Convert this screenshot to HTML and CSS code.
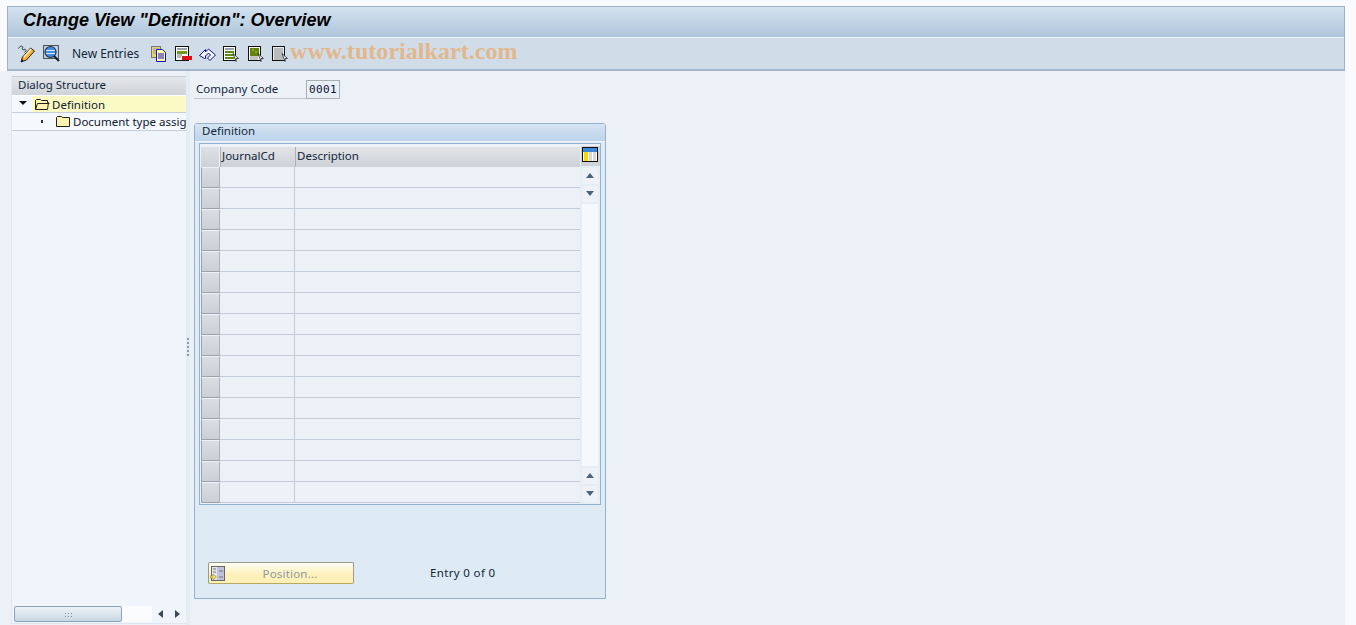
FILE: index.html
```html
<!DOCTYPE html>
<html>
<head>
  <title>Change View "Definition": Overview</title>
  <link rel="stylesheet" href="styles.css">
</head>
<body>
  <div class="window-head">
    <div class="title-bar">Change View "Definition": Overview</div>
    <div class="toolbar">
      <svg class="tool tool-edit" viewBox="0 0 18 18">
        <path d="M0.500 3.500c1-2 3-3 4-2s-1 2 0 3 2-1 3 0 0 2-1 3" fill="none" stroke="#333" stroke-width="1"/>
        <path d="M3 17l1.500-5 8-9 4 3-8 9z" fill="#f7b52e" stroke="#222" stroke-width="1"/>
        <path d="M6 12l7-8" stroke="#fff2c0" stroke-width="1.500"/>
        <path d="M3 17l0.800-3 2 1.500z" fill="#222"/>
      </svg>
      <svg class="tool tool-view" viewBox="0 0 17 17">
        <rect x="0.500" y="0.500" width="15" height="13" fill="#c3ced8" stroke="#4a5560"/>
        <circle cx="7.500" cy="7" r="5.500" fill="#3f8be6" stroke="#2a3340" stroke-width="1.200"/>
        <path d="M3 5.500h9M3 8.500h9" stroke="#d6e8fb"/>
        <path d="M11 11l5 5" stroke="#1c2228" stroke-width="2.200"/>
      </svg>
      <span class="tool-text">New Entries</span>
      <svg class="tool tool-copy" viewBox="0 0 16 16">
        <rect x="0.500" y="0.500" width="9" height="11" fill="#e2d27e" stroke="#777"/>
        <path d="M2 3h6M2 5h3M2 7h3" stroke="#999"/>
        <path d="M5.500 3.500h6l3 3v9h-9z" fill="#fff7a0" stroke="#1212cc"/>
        <path d="M7 8h6M7 10h6M7 12h6" stroke="#1212cc"/>
      </svg>
      <svg class="tool tool-delete" viewBox="0 0 17 16">
        <rect x="0.500" y="0.500" width="13" height="14" fill="#fff" stroke="#111"/>
        <path d="M2 2h10v2H2z" fill="#9aa4a8"/>
        <path d="M2 5h10v3H2z" fill="#6f9a1c"/>
        <path d="M2 9h5M2 11h4" stroke="#777"/>
        <rect x="7" y="10" width="10" height="4" fill="#e0101a"/>
      </svg>
      <svg class="tool tool-undo" viewBox="0 0 18 16">
        <path d="M0.500 9.500l6-6v2.500l3-3 7 6-5.500 5.500-2.500-2.500 3-3-2-2-3 3v2.500h-1z" fill="#f4f7fb" stroke="#10108c" stroke-width="1"/>
      </svg>
      <svg class="tool tool-page" viewBox="0 0 16 16">
        <rect x="0.500" y="0.500" width="12" height="14" fill="#fff" stroke="#111"/>
        <path d="M2 2h9v2H2z" fill="#9aa4a8"/>
        <path d="M2 5h9v2H2zM2 8h9v2H2zM2 11h9v2H2z" fill="#5f8a14"/>
        <path d="M10 7.500l5.500 5h-2.500l0 3z" fill="#fff" stroke="#222" stroke-width="0.800"/>
      </svg>
      <svg class="tool tool-page2" viewBox="0 0 16 16">
        <rect x="0.500" y="0.500" width="12" height="14" fill="#fff" stroke="#111"/>
        <path d="M2 2h9v8H2z" fill="#64800f"/>
        <path d="M4 3h2v2H4zM7 5h2v2H7z" fill="#8fae2e"/>
        <path d="M2 11h8M2 13h8" stroke="#888"/>
        <path d="M10 7.500l5.500 5h-2.500l0 3z" fill="#fff" stroke="#222" stroke-width="0.800"/>
      </svg>
      <svg class="tool tool-page3" viewBox="0 0 16 16">
        <rect x="0.500" y="0.500" width="12" height="14" fill="#ececec" stroke="#111"/>
        <path d="M2 3h9M2 5h9M2 7h9M2 9h9M2 11h9M2 13h9" stroke="#8a8a8a"/>
        <path d="M10 7.500l5.500 5h-2.500l0 3z" fill="#fff" stroke="#222" stroke-width="0.800"/>
      </svg>
    </div>
    <div class="watermark">www.tutorialkart.com</div>
  </div>

  <div class="workspace">
    <div class="tree-panel">
      <div class="tree-head">Dialog Structure</div>
      <div class="tree-row tree-row-active">
        <span class="tree-arrow"></span>
        <div class="tree-selected">
          <svg class="folder" viewBox="0 0 16 13">
            <path d="M1.500 11.500v-9l1-1h4l1 1h6v2h1l-1 7z" fill="#fdf3b0" stroke="#222"/>
            <path d="M1.500 11.500l2-6h12" fill="none" stroke="#222"/>
          </svg>
          <span>Definition</span>
        </div>
      </div>
      <div class="tree-row tree-row-child">
        <span class="tree-dot"></span>
        <svg class="folder" viewBox="0 0 16 13">
          <path d="M1.500 11.500v-9l1-1h4l1 1h7v9z" fill="#fdf3b0" stroke="#222"/>
        </svg>
        <span class="tree-label">Document type assig</span>
      </div>
      <div class="tree-fill"></div>
      <div class="tree-scroll">
        <div class="tree-thumb"><span class="grip-h"></span></div>
        <div class="tree-track"></div>
        <div class="tree-btn"><span class="arrow-left"></span></div>
        <div class="tree-btn"><span class="arrow-right"></span></div>
      </div>
    </div>

    <div class="sash"><span class="sash-grip"></span></div>

    <div class="main">
      <div class="field-row">
        <label class="field-label">Company Code</label>
        <div class="field-input">0001</div>
      </div>

      <div class="group">
        <div class="group-head">Definition</div>
        <div class="group-body">
          <div class="table-box">
            <div class="table-cols">
              <div class="table-head">
                <div class="head-sel"></div>
                <div class="head-cell head-journal">JournalCd</div>
                <div class="head-cell head-desc">Description</div>
              </div>
              <div class="row"><div class="row-sel"></div><div class="cell cell-journal"></div><div class="cell cell-desc"></div></div>
              <div class="row"><div class="row-sel"></div><div class="cell cell-journal"></div><div class="cell cell-desc"></div></div>
              <div class="row"><div class="row-sel"></div><div class="cell cell-journal"></div><div class="cell cell-desc"></div></div>
              <div class="row"><div class="row-sel"></div><div class="cell cell-journal"></div><div class="cell cell-desc"></div></div>
              <div class="row"><div class="row-sel"></div><div class="cell cell-journal"></div><div class="cell cell-desc"></div></div>
              <div class="row"><div class="row-sel"></div><div class="cell cell-journal"></div><div class="cell cell-desc"></div></div>
              <div class="row"><div class="row-sel"></div><div class="cell cell-journal"></div><div class="cell cell-desc"></div></div>
              <div class="row"><div class="row-sel"></div><div class="cell cell-journal"></div><div class="cell cell-desc"></div></div>
              <div class="row"><div class="row-sel"></div><div class="cell cell-journal"></div><div class="cell cell-desc"></div></div>
              <div class="row"><div class="row-sel"></div><div class="cell cell-journal"></div><div class="cell cell-desc"></div></div>
              <div class="row"><div class="row-sel"></div><div class="cell cell-journal"></div><div class="cell cell-desc"></div></div>
              <div class="row"><div class="row-sel"></div><div class="cell cell-journal"></div><div class="cell cell-desc"></div></div>
              <div class="row"><div class="row-sel"></div><div class="cell cell-journal"></div><div class="cell cell-desc"></div></div>
              <div class="row"><div class="row-sel"></div><div class="cell cell-journal"></div><div class="cell cell-desc"></div></div>
              <div class="row"><div class="row-sel"></div><div class="cell cell-journal"></div><div class="cell cell-desc"></div></div>
              <div class="row"><div class="row-sel"></div><div class="cell cell-journal"></div><div class="cell cell-desc"></div></div>
            </div>
            <div class="table-side">
              <div class="config-btn">
                <svg class="config-icon" viewBox="0 0 16 15">
                  <rect x="0.500" y="0.500" width="15" height="14" fill="#fff" stroke="#111"/>
                  <rect x="1" y="1" width="14" height="4" fill="#3a8ad8"/>
                  <rect x="2" y="5" width="4" height="9" fill="#f8d800"/>
                  <rect x="7" y="5" width="3" height="9" fill="#d8d8d8"/>
                  <rect x="11" y="5" width="3" height="9" fill="#d8d8d8"/>
                </svg>
              </div>
              <div class="scroll-btn"><span class="arrow-up"></span></div>
              <div class="scroll-btn"><span class="arrow-down"></span></div>
              <div class="scroll-track"></div>
              <div class="scroll-btn"><span class="arrow-up"></span></div>
              <div class="scroll-btn"><span class="arrow-down"></span></div>
            </div>
          </div>

          <div class="group-foot">
            <div class="pos-btn">
              <svg class="pos-icon" viewBox="0 0 15 15">
                <rect x="1.500" y="0.500" width="13" height="14" fill="#e4e6ee" stroke="#666"/>
                <rect x="7" y="1" width="7" height="13" fill="#bfc2da"/>
                <path d="M3 3h3M3 6h3M9 5h4M9 11h4" stroke="#777"/>
                <path d="M0 10h3V8l3.500 3-3.500 3v-2H0z" fill="#f5e04a" stroke="#776" stroke-width="0.500"/>
              </svg>
              <span class="pos-text">Position...</span>
            </div>
            <span class="entry-count">Entry 0 of 0</span>
          </div>
        </div>
      </div>
    </div>
  </div>
</body>
</html>
```

FILE: styles.css
```css
html, body {
  height: 100%;
}

body {
  margin: 0;
  padding: 6px 0 0 0;
  box-sizing: border-box;
  height: 625px;
  overflow: hidden;
  background-color: #f9fafd;
  font-family: "Noto Sans", "DejaVu Sans", sans-serif;
  font-size: 11.5px;
  color: #10202c;
  display: flex;
  flex-direction: column;
}

/* title bar and toolbar */
.window-head {
  position: relative;
  margin: 0 11px 0 7px;
  border: 1px solid #9fb2c8;
  border-bottom: 2px solid #a3b5ca;
  flex: none;
}

.title-bar {
  height: 30px;
  line-height: 27px;
  padding-left: 15px;
  background: linear-gradient(#d4e2ef, #afc5dc);
  font-family: "Liberation Sans", Arial, sans-serif;
  font-size: 18px;
  font-weight: bold;
  font-style: italic;
  color: #000;
  border-bottom: 1px solid #eef3f8;
}

.toolbar {
  height: 31px;
  background-color: #d0dde8;
  display: flex;
  align-items: center;
}

.tool {
  flex: none;
  height: 16px;
  width: 16px;
}

.tool-edit { margin-left: 10px; width: 18px; height: 18px; }
.tool-view { margin-left: 7px; width: 17px; height: 17px; }
.tool-text { margin-left: 12px; width: 67px; white-space: nowrap; font-size: 12px; color: #12263a; }
.tool-copy { margin-left: 12px; }
.tool-delete { margin-left: 8px; width: 17px; }
.tool-undo { margin-left: 7px; width: 18px; }
.tool-page { margin-left: 6px; }
.tool-page2 { margin-left: 9px; }
.tool-page3 { margin-left: 8px; }

.watermark {
  position: absolute;
  left: 282px;
  top: 31px;
  font-family: "Liberation Serif", serif;
  font-size: 24px;
  font-weight: bold;
  letter-spacing: 0.05px;
  color: #eaa766;
  opacity: 0.7;
  white-space: nowrap;
}

/* body under the toolbar */
.workspace {
  flex: 1;
  min-height: 0;
  display: flex;
  margin: 0 11px 0 0;
  background-color: #ecf1f8;
}

.tree-panel {
  margin: 5px 0 1px 11px;
  width: 175px;
  background-color: #f0f4fb;
  border-left: 1px solid #e0e7f0;
  box-sizing: border-box;
  display: flex;
  flex-direction: column;
}

.tree-head {
  height: 20px;
  line-height: 16px;
  padding-left: 6px;
  background: linear-gradient(#e4e7ea, #cfd4da);
  border-top: 1px solid #c4ccd6;
  border-bottom: 1px solid #fff;
  box-sizing: border-box;
  color: #12263a;
  flex: none;
}

.tree-row {
  display: flex;
  align-items: center;
  box-sizing: border-box;
  border-bottom: 1px solid #c5ced9;
  background-color: #f5f8fd;
  overflow: hidden;
  white-space: nowrap;
  flex: none;
}

.tree-row-active {
  height: 17px;
}

.tree-row-child {
  height: 18px;
}

.tree-arrow {
  width: 0;
  height: 0;
  margin-left: 7px;
  margin-right: 5px;
  margin-bottom: 3px;
  border-left: 4px solid transparent;
  border-right: 4px solid transparent;
  border-top: 4px solid #111;
}

.tree-selected {
  flex: 1;
  height: 100%;
  display: flex;
  align-items: center;
  background-color: #fbfac5;
  padding-left: 2px;
}

.tree-dot {
  width: 2px;
  height: 3px;
  margin-left: 29px;
  margin-right: 12px;
  background-color: #333;
  flex: none;
}

.folder {
  width: 16px;
  height: 13px;
  margin-right: 2px;
  flex: none;
}

.tree-label {
  flex: 1;
  min-width: 0;
  overflow: hidden;
}

.tree-fill {
  flex: 1;
}

.tree-scroll {
  height: 18px;
  display: flex;
  align-items: center;
  padding-left: 2px;
  border-bottom: 1px solid #dfe6ef;
  flex: none;
}

.tree-thumb {
  width: 109px;
  height: 16px;
  box-sizing: border-box;
  border: 1px solid #8aa3bb;
  border-radius: 2px;
  background: linear-gradient(#edf2f6, #c9d8e4);
  display: flex;
  align-items: center;
  justify-content: center;
}

.grip-h {
  width: 8px;
  height: 5px;
  background-image: radial-gradient(#7d8c99 1px, transparent 1px);
  background-size: 3px 3px;
}

.tree-track {
  width: 30px;
  height: 16px;
  background-color: #fbfcfe;
}

.tree-btn {
  width: 17px;
  height: 16px;
  display: flex;
  align-items: center;
  justify-content: center;
}

.arrow-left, .arrow-right {
  width: 0;
  height: 0;
  border-top: 4px solid transparent;
  border-bottom: 4px solid transparent;
}

.arrow-left { border-right: 5px solid #3c4a58; }
.arrow-right { border-left: 5px solid #3c4a58; }

.sash {
  width: 4px;
  background-color: #e4ecf4;
  display: flex;
  align-items: center;
  flex: none;
}

.sash-grip {
  width: 2px;
  height: 20px;
  margin-left: 1px;
  background-image: linear-gradient(#8b98a8 2px, transparent 2px);
  background-size: 2px 4px;
}

.main {
  flex: 1;
  padding: 9px 0 0 4px;
}

.field-row {
  display: flex;
  height: 19px;
  width: 146px;
}

.field-label {
  width: 112px;
  padding-left: 2px;
  line-height: 18px;
  border-bottom: 1px solid #c0c6cc;
  box-sizing: border-box;
  color: #12263a;
}

.field-input {
  width: 34px;
  height: 19px;
  box-sizing: border-box;
  border: 1px solid #a9aeb2;
  background-color: #e9eff6;
  font-family: "DejaVu Sans Mono", monospace;
  font-size: 11px;
  letter-spacing: 0.4px;
  line-height: 17px;
  text-align: center;
  color: #101030;
}

.group {
  width: 412px;
  margin-top: 24px;
  height: 476px;
  box-sizing: border-box;
  border: 1px solid #93b2d0;
  border-top-left-radius: 3px;
  border-top-right-radius: 3px;
  display: flex;
  flex-direction: column;
}

.group-head {
  height: 17px;
  line-height: 14px;
  padding-left: 7px;
  background: linear-gradient(#d5e4f2, #bdd4ea);
  flex: none;
  color: #12263a;
}

.group-body {
  flex: 1;
  background-color: #deebf4;
  padding: 1px 4px 0 4px;
  border-top: 1px solid #eef4fa;
  display: flex;
  flex-direction: column;
}

.table-box {
  height: 362px;
  box-sizing: border-box;
  border: 1px solid #93b2d0;
  background-color: #ecf1f8;
  display: flex;
  padding: 3px 0 0 1px;
  flex: none;
}

.table-cols {
  width: 379px;
  flex: none;
}

.table-head {
  display: flex;
  height: 20px;
}

.head-sel {
  width: 19px;
  box-sizing: border-box;
  background: linear-gradient(#dde0e4, #cdd2d8);
  border-right: 1px solid #eef2f7;
}

.head-cell {
  background: linear-gradient(#e2e4e7, #cdd2d8);
  border-left: 1px solid #a9b1bc;
  box-sizing: border-box;
  line-height: 17px;
  padding-left: 1px;
  color: #12263a;
}

.head-journal { width: 75px; }
.head-desc { width: 285px; }

.row {
  display: flex;
  height: 21px;
}

.row-sel {
  width: 19px;
  box-sizing: border-box;
  border: 1px solid #eef2f7;
  border-left-color: #9aa2ac;
  border-right-color: #aab2bc;
  border-bottom-color: #9aa2ac;
  background: linear-gradient(#dadee3, #cbd0d6);
}

.cell {
  box-sizing: border-box;
  border-bottom: 1px solid #c3ccd9;
}

.cell-journal {
  width: 75px;
  border-right: 1px solid #c3ccd9;
}

.cell-desc {
  width: 285px;
}

.table-side {
  width: 20px;
  background-color: #e6eef5;
  display: flex;
  flex-direction: column;
  align-items: center;
  padding-bottom: 2px;
  flex: none;
}

.config-btn {
  width: 19px;
  height: 20px;
  margin-top: -1px;
  padding-top: 1px;
  box-sizing: border-box;
  display: flex;
  align-items: flex-start;
  justify-content: center;
  background-color: #d0d4d9;
  flex: none;
}

.config-icon {
  width: 16px;
  height: 15px;
}

.scroll-btn {
  width: 16px;
  height: 16px;
  margin-top: 2px;
  background-color: #eef2f8;
  display: flex;
  align-items: center;
  justify-content: center;
  flex: none;
}

.arrow-up, .arrow-down {
  width: 0;
  height: 0;
  margin-bottom: 2px;
  border-left: 4px solid transparent;
  border-right: 4px solid transparent;
}

.arrow-up { border-bottom: 5px solid #4d6478; }
.arrow-down { border-top: 5px solid #4d6478; }

.scroll-track {
  width: 16px;
  flex: 1;
  margin-top: 2px;
  background-color: #f5f8fc;
}

.group-foot {
  flex: 1;
  display: flex;
  align-items: flex-end;
  padding: 0 0 14px 9px;
}

.pos-btn {
  width: 146px;
  height: 22px;
  box-sizing: border-box;
  border: 1px solid #9a9a90;
  border-bottom-color: #b8a860;
  border-radius: 2px;
  background: linear-gradient(#fffef4, #fdf0b8 60%);
  display: flex;
  align-items: center;
}

.pos-icon {
  width: 15px;
  height: 15px;
  margin-left: 1px;
  flex: none;
}

.pos-text {
  flex: 1;
  text-align: center;
  color: #8d9ba6;
  letter-spacing: 0.2px;
  padding-left: 2px;
}

.entry-count {
  margin-left: 76px;
  height: 22px;
  line-height: 22px;
  letter-spacing: 0.35px;
  color: #12263a;
}
```
